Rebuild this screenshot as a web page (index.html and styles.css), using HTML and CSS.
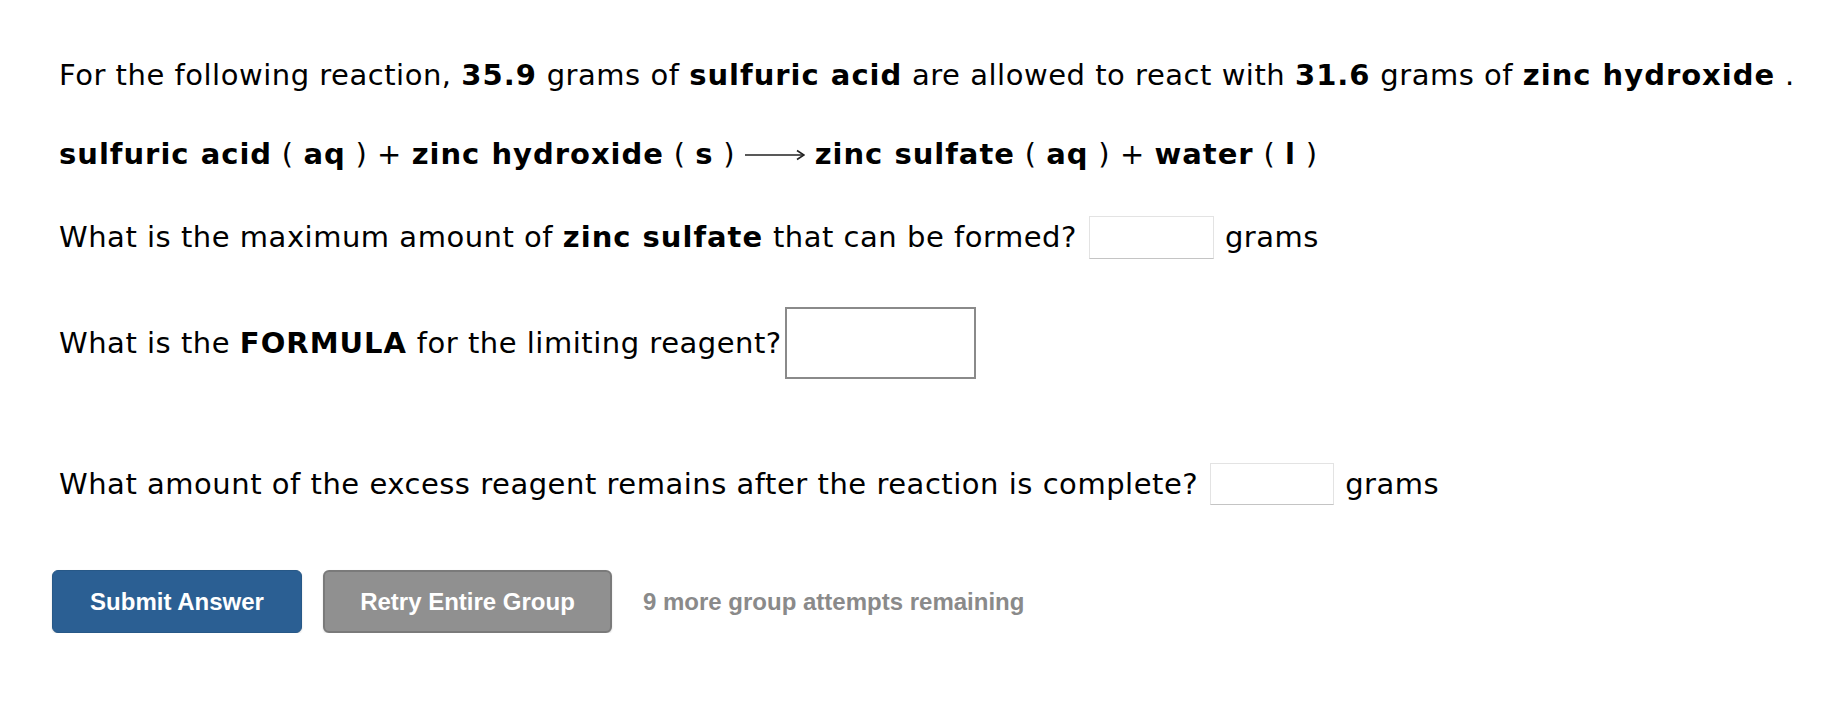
FILE: index.html
```html
<!DOCTYPE html>
<html lang="en">
<head>
<meta charset="utf-8">
<title>Limiting reagent</title>
<link rel="stylesheet" href="styles.css">
</head>
<body>
<div class="question">
  <div class="row intro"><span>For the following reaction, <b>35.9</b> grams of <b>sulfuric acid</b> are allowed to react with <b>31.6</b> grams of <b>zinc hydroxide</b> .</span></div>
  <div class="row equation"><span><b>sulfuric acid</b> ( <b>aq</b> ) + <b>zinc hydroxide</b> ( <b>s</b> ) <svg class="arrow" width="60" height="14" viewBox="0 0 60 14" aria-label="yields"><line x1="0" y1="7" x2="58.5" y2="7" stroke="#222" stroke-width="1.6"/><polyline points="52,2.5 59,7 52,11.5" fill="none" stroke="#222" stroke-width="1.6" stroke-linejoin="miter"/></svg> <b>zinc sulfate</b> ( <b>aq</b> ) + <b>water</b> ( <b>l</b> )</span></div>
  <div class="row q1"><span>What is the maximum amount of <b>zinc sulfate</b> that can be formed?</span><span class="field small"></span><span>grams</span></div>
  <div class="row q2"><span>What is the <b>FORMULA</b> for the limiting reagent?</span><span class="field big"></span></div>
  <div class="row q3"><span>What amount of the excess reagent remains after the reaction is complete?</span><span class="field small"></span><span>grams</span></div>
  <div class="actions">
    <button class="btn submit">Submit Answer</button>
    <button class="btn retry">Retry Entire Group</button>
    <span class="attempts">9 more group attempts remaining</span>
  </div>
</div>
</body>
</html>
```

FILE: styles.css
```css
html, body {
  margin: 0;
  padding: 0;
  background: #ffffff;
}

.question {
  padding: 55px 0 0 59px;
  font-family: "DejaVu Sans", Verdana, sans-serif;
  font-size: 29px;
  letter-spacing: 0.52px;
  color: #000;
  display: flex;
  flex-direction: column;
}

.question b {
  font-weight: bold;
  letter-spacing: 1px;
}

.row {
  display: flex;
  align-items: center;
  white-space: pre;
  line-height: 40px;
}

.intro { height: 40px; }
.equation { height: 40px; margin-top: 39px; }
.q1 { height: 44px; margin-top: 41px; }
.q2 { height: 72px; margin-top: 48px; }
.q3 { height: 42px; margin-top: 84px; }

.arrow {
  display: inline-block;
  vertical-align: middle;
  margin-top: -2px;
}

.field {
  display: inline-block;
  box-sizing: border-box;
  background: #fff;
}

.field.small {
  width: 125px;
  height: 43px;
  border: 1px solid #e3e3e3;
  border-bottom-color: #c4c4c4;
  margin: 0 11px 0 12px;
}

.q3 .field.small {
  width: 124px;
  height: 42px;
}

.field.big {
  width: 191px;
  height: 72px;
  border: 2px solid #8a8a8a;
  margin-left: 3px;
}

.actions {
  display: flex;
  align-items: center;
  margin-top: 65px;
  margin-left: -7px;
  font-family: "Liberation Sans", Arial, sans-serif;
  font-weight: bold;
  font-size: 24px;
  letter-spacing: 0;
}

.btn {
  font-family: inherit;
  font-weight: bold;
  font-size: 24px;
  color: #fff;
  height: 63px;
  border-radius: 6px;
  box-sizing: border-box;
  padding: 0;
  cursor: pointer;
}

.submit {
  width: 250px;
  background: #2b5f93;
  border: 1px solid #275887;
  box-shadow: 0 1px 2px rgba(0,0,0,0.15);
}

.retry {
  width: 289px;
  margin-left: 21px;
  background: #909090;
  border: 2px solid #7a7a7a;
  box-shadow: 0 1px 2px rgba(0,0,0,0.15);
}

.attempts {
  margin-left: 31px;
  color: #8a8a8a;
}
```
